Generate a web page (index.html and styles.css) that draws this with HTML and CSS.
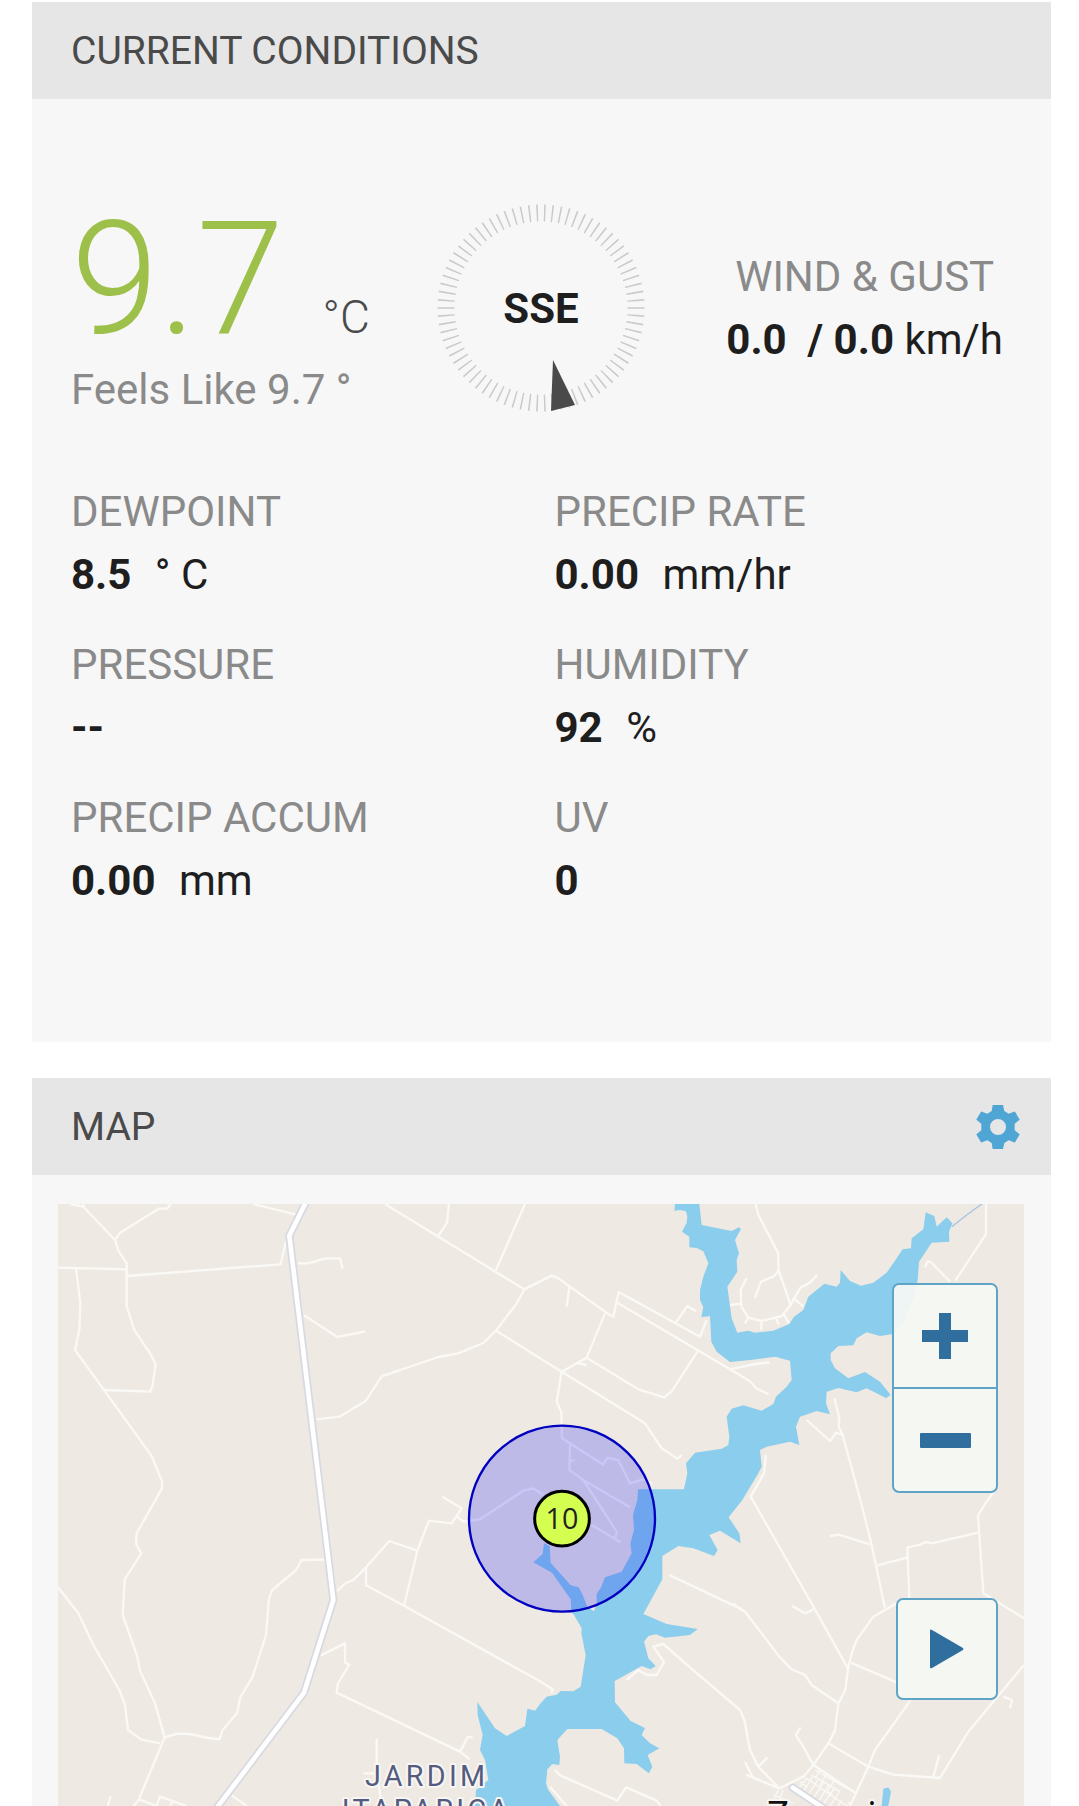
FILE: index.html
```html
<!DOCTYPE html>
<html lang="en">
<head>
  <meta charset="UTF-8">
  <meta name="viewport" content="width=device-width, initial-scale=1.0">
  <title>Current Conditions</title>
  <link rel="stylesheet" href="styles.css">
</head>
<body>
  <main class="page">
    <section class="card">
      <div class="card-header">
        <h2>CURRENT CONDITIONS</h2>
      </div>
      <div class="conditions">
        <div class="summary">
          <div class="temperature">
            <div class="temp">9.7 <span class="temp-unit">°C</span></div>
            <div class="feels-like">Feels Like 9.7 °</div>
          </div>
          <div class="compass">
            <svg class="compass-dial" viewBox="0 0 208 208" aria-hidden="true">
              <circle class="dial-ticks" cx="104" cy="104" r="95" pathLength="780" />
              <path class="dial-needle" d="M116 156L114 207L138 201Z" />
            </svg>
            <span class="compass-label">SSE</span>
          </div>
          <dl class="wind">
            <dt>WIND &amp; GUST</dt>
            <dd><b>0.0 &nbsp;/ 0.0</b> km/h</dd>
          </dl>
        </div>
        <dl class="stats">
          <div>
            <dt>DEWPOINT</dt>
            <dd><b>8.5</b> <span class="unit">° C</span></dd>
          </div>
          <div>
            <dt>PRECIP RATE</dt>
            <dd><b>0.00</b> <span class="unit">mm/hr</span></dd>
          </div>
          <div>
            <dt>PRESSURE</dt>
            <dd><b>--</b></dd>
          </div>
          <div>
            <dt>HUMIDITY</dt>
            <dd><b>92</b> <span class="unit">%</span></dd>
          </div>
          <div>
            <dt>PRECIP ACCUM</dt>
            <dd><b>0.00</b> <span class="unit">mm</span></dd>
          </div>
          <div>
            <dt>UV</dt>
            <dd><b>0</b></dd>
          </div>
        </dl>
      </div>
    </section>

    <section class="card">
      <div class="card-header">
        <h2>MAP</h2>
        <button type="button" class="settings" aria-label="Map settings">
          <svg viewBox="0 0 130 132" aria-hidden="true">
            <path fill-rule="evenodd" d="M49 0H80L84 18L97 26L113 20Q116 19 117 22L129 42Q131 44 128 46L115 56V76L128 86Q131 88 129 90L117 110Q116 113 113 112L97 106L84 114L80 132H49L46 114L33 106L17 112Q14 113 13 110L1 90Q-1 88 2 86L15 76V56L2 46Q-1 44 1 42L13 22Q14 19 17 20L33 26L46 18ZM65 42A24 24 0 1 0 65 90A24 24 0 1 0 65 42Z" />
          </svg>
        </button>
      </div>
      <div class="map-body">
        <div class="map">
          <svg class="map-canvas" viewBox="54 42 2898 1806" preserveAspectRatio="xMidYMin slice" role="img" aria-label="Map of the station area">
            <!-- minor roads, west -->
            <g class="road">
              <path d="M90 42L130 50L225 150L235 182L260 220V348L282 418L330 490L347 522L337 590L330 605L192 600" />
              <path d="M130 42V50M225 150L240 128L356 56H382L392 42M54 233L260 238M260 258L722 223L738 155" />
              <path d="M108 235L121 340L118 420L105 480L192 600L335 798L366 875V895L290 1030L288 1062L304 1090L254 1168L248 1275L292 1400L300 1442L345 1540L374 1642L295 1832L280 1848" />
              <path d="M54 1192L115 1270L160 1365L238 1500L255 1545L264 1620L303 1648L360 1660" />
              <path d="M374 1642L412 1631L450 1632L505 1644L538 1648L548 1620L592 1568L600 1524L638 1460L678 1335L687 1225L697 1200L768 1140L785 1110L856 1109" />
              <path d="M640 42L768 74M774 220H804L858 205H900L908 236M792 376L892 441L975 424" />
              <path d="M830 688L898 680L976 634L1025 559L1195 501L1255 490L1330 459L1368 422L1430 340L1453 298L1035 42M1195 138L1221 98L1227 42M1368 240L1455 42" />
              <path d="M1368 422L1565 545L1815 700L1865 775L1912 806L1925 795" />
              <path d="M1453 298L1535 257L1555 265L1705 372L1720 380L1736 306L1980 440L2000 390M1588 292L1580 350M1732 338L2070 538L2130 574L2150 596L2185 612M1906 400L1942 348L1968 364" />
              <path d="M1695 370L1640 503L1565 545L1550 635L1564 665L1566 745L1690 824L1703 803L1735 811L1770 880L1810 868L1836 882" />
              <path d="M1640 503L1795 598L1872 622L1895 604L1972 485M1615 520L1640 525M2070 538L2145 522L2190 517" />
              <path d="M1590 765L1588 840L1630 870L1770 952M1604 812H1590M1630 870L1730 1025L1726 1045M1655 1005L1742 1057" />
              <path d="M1207 920L1265 955L1235 1000L1167 992L1132 1082L1092 1247M1249 978L1270 995L1320 988L1450 902L1480 895L1510 915M1132 1082L1048 1053L978 1132L940 1170L915 1180L892 1203M978 1132V1186L1092 1247L1500 1474L1538 1498L1534 1510" />
              <path d="M843 1396L915 1360V1418L928 1424L893 1482L890 1508L1260 1685L1290 1708M1260 1685L1284 1640L1298 1643M1010 1646V1740L1025 1848M970 1750H1010" />
              <path d="M575 1816L620 1848M212 1818L203 1848M298 1828L350 1848L360 1820L440 1848M400 1830L390 1848" />
              <path d="M1545 1740L1560 1756L1732 1832L1758 1792L1850 1832L1862 1848M1530 1790L1580 1848" />
            </g>
            <!-- minor roads, east -->
            <g class="road">
              <path d="M2147 42L2155 75L2214 188L2216 242L2252 345L2225 378L2165 393L2125 383L2104 350L2102 300L2120 265M2216 242L2200 260L2163 275L2145 323M2252 345L2262 325L2282 292L2310 278L2332 254M2262 325L2290 350M2070 345L2102 341M2115 400L2125 383M2163 420L2165 393M2208 382L2216 405M2232 372L2246 400" />
              <path d="M2838 42V132L2746 272M2655 232L2662 215L2672 216L2730 275" />
              <path d="M2383 625L2398 685L2396 710L2408 735L2465 945L2495 1065L2535 1255M2300 690L2370 753L2388 728L2408 735" />
              <path d="M2178 795L2172 850L2132 920L2325 1258L2424 1436L2435 1390L2450 1350L2500 1280L2570 1240" />
              <path d="M2865 900L2835 942L2814 977L2830 1210L2952 1285M2814 1028L2675 1060L2658 1056L2640 1064L2602 1073L2608 1225M2602 1103L2512 1126M2495 1065L2397 1034L2370 1038" />
              <path d="M1888 1155L2100 1255L2115 1265L2218 1400L2255 1438L2295 1455L2315 1485L2395 1540M2080 1240L2105 1262M2257 1248L2295 1270L2320 1258" />
              <path d="M1760 1470L1795 1440L1820 1455H1850L1872 1416L1840 1370L1870 1362L1950 1432L2100 1560L2113 1590L2130 1680L2155 1730L2218 1795M2155 1730L2183 1702M2115 1716L2136 1758M2118 1754L2218 1795L2290 1760L2320 1725L2365 1660L2385 1622L2395 1540L2416 1500L2424 1436" />
              <path d="M2433 1418L2570 1477M2320 1725L2290 1670L2267 1635L2282 1612M2365 1660L2485 1730L2560 1754L2700 1764L2785 1625L2952 1425M2680 1760L2698 1695M2890 1520L2916 1530L2910 1555" />
              <path d="M2612 1530L2505 1680L2485 1730L2430 1848M2320 1725L2445 1808" />
            </g>
            <!-- town streets -->
            <g class="street">
              <path d="M2325 1740L2420 1795M2315 1755L2400 1805M2300 1765L2420 1848M2280 1775L2300 1790M2300 1765L2275 1795M2318 1760L2290 1805M2334 1768L2305 1815M2350 1778L2320 1825M2366 1786L2335 1835M2382 1796L2350 1842M2398 1806L2370 1848M2340 1740L2325 1765M2360 1752L2340 1785M2385 1768L2362 1805M2405 1830L2395 1848M2360 1805L2380 1815M2430 1835L2420 1848M2215 1800L2200 1830M2230 1800L2215 1835M2200 1815L2260 1840" />
            </g>
            <!-- reservoir -->
            <path class="water" d="M1905 42L1903 62L1920 60L1938 64L1942 80L1940 98L1926 125L1948 140V172L1970 174L1990 184L2005 220L1990 260L1980 300V330L1990 352L1984 382L2010 378L2014 455L2030 485L2070 516L2130 510L2205 500L2250 512L2255 570L2240 590L2208 620L2200 642L2165 662L2110 646L2075 656L2060 680L2068 740L2065 765L2045 776L1965 788L1938 820L1942 850L1932 898H1794L1792 930L1779 975L1782 1020L1771 1060L1775 1090L1745 1145L1695 1162L1684 1190L1670 1212V1240L1662 1264L1642 1250L1628 1215L1616 1192L1592 1186L1532 1118L1529 1068L1512 1060L1508 1092L1480 1117L1536 1148L1592 1228L1594 1265L1602 1275L1625 1315L1624 1330L1637 1395L1622 1490L1600 1504L1562 1503L1550 1514L1520 1520L1500 1542L1485 1562L1462 1556L1455 1608L1400 1638L1365 1615L1312 1536L1313 1575L1328 1635L1320 1680L1335 1710L1345 1770L1308 1800L1305 1848H1560L1525 1800L1518 1780L1522 1738L1537 1722L1558 1725L1560 1700L1552 1650L1582 1617H1685L1732 1645L1752 1675L1753 1720L1790 1722L1827 1750L1837 1730L1823 1695L1858 1675L1830 1660L1805 1635L1815 1614L1772 1593L1725 1537L1724 1473L1805 1428L1832 1438L1847 1428L1825 1405L1812 1355L1825 1338L1848 1333L1875 1343L1950 1335L1973 1317L1880 1302L1810 1272L1867 1168V1098L1915 1068L1960 1075L2022 1098L2033 1080L2008 1035L2040 1022L2102 1060L2098 1030L2066 982L2107 930L2155 850L2165 830L2160 780L2180 770L2250 755L2278 765L2268 710L2280 680L2330 663L2370 673L2358 640L2360 605L2395 594L2450 607L2480 595L2538 624L2552 615L2520 575L2475 546L2425 565L2385 535L2372 510V490L2395 468L2440 466L2450 445L2480 427L2520 438L2560 432L2590 395L2622 320L2633 270L2637 215L2675 158L2728 155L2727 125L2737 100L2720 82L2690 110L2683 78L2657 67L2650 118L2615 145L2613 175L2588 178L2565 212L2540 248L2500 278L2463 287L2430 273L2402 240L2400 278L2390 290L2353 281L2305 320L2290 360L2262 380L2248 402L2200 422L2145 428L2125 422L2092 428L2075 385L2062 290L2092 245L2090 210L2097 190L2085 150L2103 117L2097 112L2075 123L1985 105L1978 42Z" />
            <path class="water" d="M2530 1796L2545 1792L2553 1805L2545 1848H2525Z" />
            <path class="stream" d="M2735 110L2780 75L2825 42" />
            <!-- main road -->
            <path class="highway-case" d="M798 36L748 137L880 1230L792 1508L530 1854" />
            <path class="highway" d="M798 36L748 137L880 1230L792 1508L530 1854" />
            <path class="highway-case" d="M2258 1793L2350 1854" stroke-linecap="round" />
            <path class="highway" d="M2258 1793L2350 1854" stroke-linecap="round" />
            <!-- place names -->
            <text class="district" x="1160" y="1787">JARDIM</text>
            <text class="district" x="1160" y="1890">ITAPARICA</text>
            <text class="town" x="2180" y="1918">Zacarias</text>
            <!-- station -->
            <circle class="range" cx="1566" cy="986" r="279" />
            <circle class="station" cx="1566" cy="986" r="82" />
            <text class="station-temp" x="1566" y="1018">10</text>
          </svg>
          <div class="map-controls">
            <div class="zoom">
              <button type="button" aria-label="Zoom in">
                <svg width="46" height="46" viewBox="0 0 46 46" aria-hidden="true">
                  <path d="M17 0H29V17H46V29H29V46H17V29H0V17H17Z" />
                </svg>
              </button>
              <button type="button" aria-label="Zoom out">
                <svg width="51" height="15" viewBox="0 0 51 15" aria-hidden="true">
                  <rect width="51" height="15" rx="1" />
                </svg>
              </button>
            </div>
            <button type="button" class="play" aria-label="Play">
              <svg width="34" height="40" viewBox="0 0 34 40" aria-hidden="true">
                <path d="M0 1Q0 0 2 1L33 19Q34 20 33 21L2 39Q0 40 0 38Z" />
              </svg>
            </button>
          </div>
        </div>
      </div>
    </section>
  </main>
</body>
</html>
```

FILE: styles.css
```css
* {
  box-sizing: border-box;
}

body {
  margin: 0;
  background-color: #fff;
  color: #1e1e1e;
  font-family: Roboto, Arial, sans-serif;
  font-size: 42px;
  line-height: 63px;
}

h2, dl, dd {
  margin: 0;
}

.page {
  display: flex;
  flex-direction: column;
  gap: 36px;
  padding: 2px 28px 0 32px;
}

.card {
  background-color: #f7f7f7;
}

.card-header {
  display: flex;
  justify-content: space-between;
  align-items: center;
  height: 97px;
  padding: 0 31px 0 39px;
  background-color: #e6e6e6;
}

h2 {
  padding-top: 2px;
  font-size: 39px;
  font-weight: 400;
  color: #4a4a4a;
}

button {
  display: flex;
  justify-content: center;
  align-items: center;
  padding: 0;
  border: none;
  background: none;
  cursor: pointer;
}

.settings svg {
  width: 44px;
  height: 44px;
  fill: #4fa6d5;
}

/* Current conditions */
.conditions {
  padding: 98px 40px 130px 39px;
}

.summary {
  display: grid;
  grid-template-columns: 1fr 208px 1fr;
  align-items: center;
  margin-bottom: 61px;
}

.temp {
  font-size: 158px;
  font-weight: 300;
  line-height: 164px;
  color: #9dc04a;
  white-space: nowrap;
}

.temp-unit {
  font-size: 46px;
  line-height: 1;
  color: #4a4a4a;
}

.feels-like {
  line-height: 58px;
  color: #8a8a8a;
}

.compass {
  position: relative;
  display: flex;
  justify-content: center;
  align-items: center;
  height: 208px;
}

.compass-dial {
  position: absolute;
  width: 100%;
  height: 100%;
}

.dial-ticks {
  fill: none;
  stroke: #cacaca;
  stroke-width: 17;
  stroke-dasharray: 2 8;
  stroke-dashoffset: 1;
}

.dial-needle {
  fill: #4a4a4a;
}

.compass-label {
  font-weight: 700;
}

.wind {
  justify-self: end;
  padding-right: 8px;
  text-align: center;
  white-space: nowrap;
}

dt {
  color: #8a8a8a;
}

b {
  font-weight: 700;
}

.stats {
  display: grid;
  grid-template-columns: 1fr 1fr;
  gap: 27px;
}

.unit {
  margin-left: 13px;
}

/* Map */
.map-body {
  padding: 29px 27px 0 26px;
}

.map {
  position: relative;
  aspect-ratio: 966 / 602;
  background-color: #eee9e3;
  overflow: hidden;
}

.map-canvas {
  display: block;
  width: 100%;
  height: 100%;
}

.road, .street {
  fill: none;
  stroke: #fbf9f5;
  stroke-width: 7;
  stroke-linejoin: round;
}

.street {
  stroke-width: 4;
}

.water {
  fill: #8bcdec;
}

.stream {
  fill: none;
  stroke: #a6c4e2;
  stroke-width: 4;
}

.highway-case, .highway {
  fill: none;
  stroke: #d6d9e0;
  stroke-width: 24;
}

.highway {
  stroke: #fff;
  stroke-width: 14;
}

.district, .town {
  paint-order: stroke;
  stroke: #f8f6f3;
  stroke-width: 12;
  stroke-linejoin: round;
}

.district {
  fill: #545b80;
  font-size: 86px;
  letter-spacing: 10px;
  text-anchor: middle;
}

.town {
  fill: #111;
  font-family: "Open Sans", sans-serif;
  font-size: 117px;
}

.range {
  fill: #00f;
  fill-opacity: 0.2;
  stroke: #0000c0;
  stroke-width: 7;
}

.station {
  fill: #d4ff50;
  stroke: #000;
  stroke-width: 9;
}

.station-temp {
  fill: #222;
  font-family: "Open Sans", sans-serif;
  font-size: 86px;
  text-anchor: middle;
}

.map-controls {
  position: absolute;
  top: 79px;
  right: 26px;
  display: flex;
  flex-direction: column;
  align-items: flex-end;
  gap: 105px;
}

.zoom, .play {
  border: 2px solid #5fa3c7;
  border-radius: 7px;
  background-color: rgba(245, 247, 244, 0.93);
}

.zoom button {
  width: 102px;
  height: 102px;
}

.zoom button + button {
  height: 104px;
  border-top: 2px solid #5fa3c7;
}

.play {
  width: 102px;
  height: 102px;
}

.map-controls svg {
  fill: #306f9d;
}
```
